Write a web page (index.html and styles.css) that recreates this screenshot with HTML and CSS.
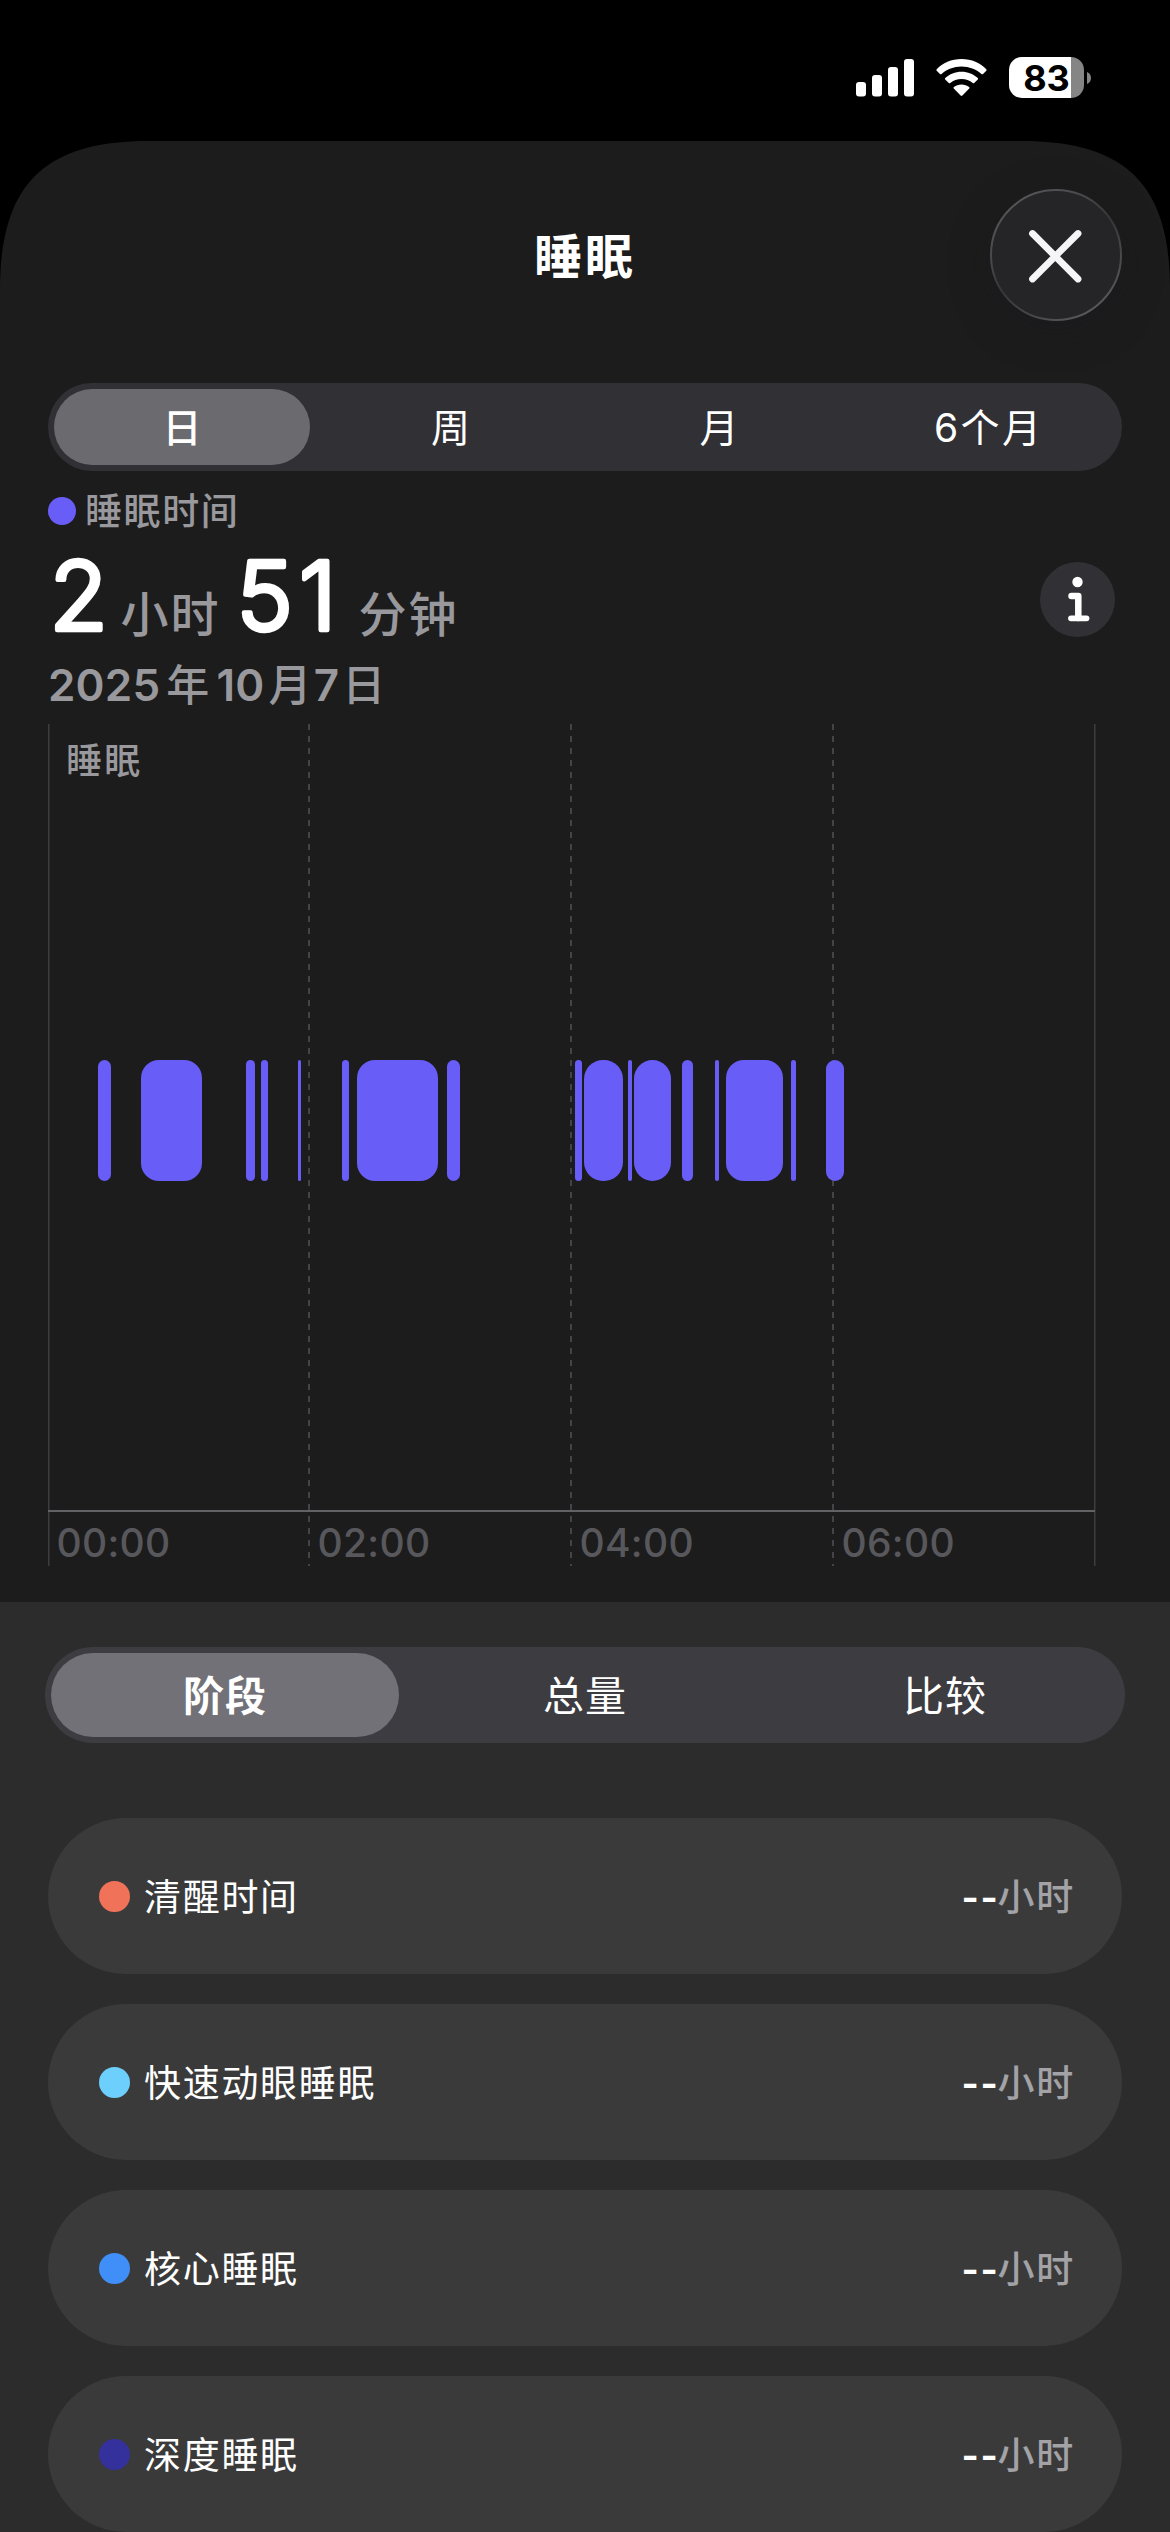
FILE: index.html
```html
<!DOCTYPE html>
<html lang="zh-CN">
<head>
<meta charset="utf-8">
<title>睡眠</title>
<link rel="stylesheet" href="styles.css">
</head>
<body>
<div class="status">
  <svg class="signal" width="58" height="38" viewBox="0 0 58 38" fill="#fff">
    <rect x="0" y="23" width="10" height="14.5" rx="3"/>
    <rect x="16" y="16" width="10" height="21.500" rx="3"/>
    <rect x="32" y="8" width="10" height="29.500" rx="3"/>
    <rect x="48" y="0" width="10" height="37.500" rx="3"/>
  </svg>
  <svg class="wifi" width="51" height="38" viewBox="0 0 51 38" fill="#fff">
    <path d="M25.500 0C35.500 0 44.500 3.900 50.300 10.200Q51 11 50.300 11.700L47 15Q46.200 15.700 45.400 15C40.200 10.300 33.200 7.500 25.500 7.500S10.800 10.300 5.600 15Q4.800 15.700 4 15L.7 11.700Q0 11 .7 10.200C6.500 3.900 15.500 0 25.500 0Z"/>
    <path d="M25.500 12.700C31.800 12.700 37.500 15.100 41.800 19Q42.500 19.700 41.800 20.500L38.200 24Q37.500 24.700 36.700 24C33.700 21.500 29.800 20 25.500 20S17.300 21.500 14.300 24Q13.500 24.700 12.800 24L9.200 20.500Q8.500 19.700 9.200 19C13.500 15.100 19.200 12.700 25.500 12.700Z"/>
    <path d="M25.500 25.500C28.400 25.500 31 26.400 33.100 28Q33.900 28.800 33.200 29.600L26.400 36.600Q25.500 37.400 24.600 36.600L17.800 29.600Q17.100 28.800 17.900 28C20 26.400 22.600 25.500 25.500 25.500Z"/>
  </svg>
  <div class="battery"><span class="battery-level">83</span></div>
  <svg class="nub" width="4" height="12" viewBox="0 0 4 12"><path d="M0 0C2.500 1 4 3.300 4 6S2.500 11 0 12Z" fill="#858585"/></svg>
</div>

<main class="sheet">
  <header class="header">
    <h1 class="title">睡眠</h1>
    <button class="close" aria-label="关闭">
      <svg width="132" height="132" viewBox="0 0 132 132">
        <defs>
          <linearGradient id="rim" x1=".15" y1="0" x2=".85" y2="1">
            <stop offset="0" stop-color="#5a5a5e"/>
            <stop offset=".3" stop-color="#48484c"/>
            <stop offset=".5" stop-color="#363638"/>
            <stop offset=".7" stop-color="#464648"/>
            <stop offset="1" stop-color="#5e5e60"/>
          </linearGradient>
        </defs>
        <circle cx="66" cy="66" r="65" fill="#252527" stroke="url(#rim)" stroke-width="2"/>
        <path d="M42.500 44.500 88 90M88 44.500 42.500 90" stroke="#f5f5f7" stroke-width="6.800" stroke-linecap="round"/>
      </svg>
    </button>
  </header>

  <nav class="range">
    <span class="range-item range-item-on">日</span>
    <span class="range-item">周</span>
    <span class="range-item">月</span>
    <span class="range-item">6个月</span>
  </nav>

  <section class="summary">
    <div class="legend"><i class="legend-dot"></i>睡眠时间</div>
    <div class="value-row">
      <svg class="value" width="500" height="122" viewBox="0 0 500 122">
        <text class="digits" x="1.500" y="99">2</text>
        <text class="unit" x="72.500" y="101">小时</text>
        <text class="digits" x="188.500 251" y="99">51</text>
        <text class="unit" x="310.500" y="101">分钟</text>
      </svg>
      <svg class="info" width="75" height="75" viewBox="0 0 75 75">
        <circle cx="37.500" cy="37.500" r="37.500" fill="#313034"/>
        <circle cx="37.500" cy="20" r="5.200" fill="#fff"/>
        <path d="M31.500 34H38.300V56" fill="none" stroke="#fff" stroke-width="6.500" stroke-linecap="round" stroke-linejoin="round"/>
        <path d="M31 56.300H46.500" stroke="#fff" stroke-width="5.800" stroke-linecap="round"/>
      </svg>
    </div>
    <div class="date">2025<b class="year">年</b>10<b class="month">月</b>7<b class="day">日</b></div>
  </section>

  <svg class="chart" width="1048" height="842" viewBox="0 0 1048 842">
    <g class="grid-solid">
      <path d="M.75 0V842"/><path d="M1046.750 0V842"/>
    </g>
    <g class="grid-dashed">
      <path d="M261 0V842"/><path d="M523 0V842"/><path d="M785 0V842"/>
    </g>
    <path class="axis" d="M0 787H1047"/>
    <g class="bars">
      <rect x="50" y="336" width="13" height="121" rx="6.500"/>
      <rect x="93" y="336" width="61" height="121" rx="18"/>
      <rect x="198" y="336" width="9" height="121" rx="4.500"/>
      <rect x="213" y="336" width="7" height="121" rx="3.500"/>
      <rect x="250" y="336" width="3" height="121" rx="1.500"/>
      <rect x="294" y="336" width="7" height="121" rx="3.500"/>
      <rect x="309" y="336" width="81" height="121" rx="18"/>
      <rect x="399" y="336" width="13" height="121" rx="6.500"/>
      <rect x="527" y="336" width="7" height="121" rx="3.500"/>
      <rect x="536" y="336" width="39" height="121" rx="19"/>
      <rect x="580" y="336" width="4" height="121" rx="2"/>
      <rect x="586" y="336" width="37" height="121" rx="18.500"/>
      <rect x="634" y="336" width="11" height="121" rx="5.500"/>
      <rect x="667" y="336" width="4" height="121" rx="2"/>
      <rect x="678" y="336" width="57" height="121" rx="18"/>
      <rect x="743" y="336" width="5" height="121" rx="2.500"/>
      <rect x="778" y="336" width="18" height="121" rx="9"/>
    </g>
    <text class="series" x="18" y="50">睡眠</text>
    <g class="hours">
      <text x="8.500" y="833">00:00</text>
      <text x="269.500" y="833">02:00</text>
      <text x="531.500" y="833">04:00</text>
      <text x="793.500" y="833">06:00</text>
    </g>
  </svg>

  <section class="panel">
    <nav class="modes">
      <span class="mode mode-on">阶段</span>
      <span class="mode">总量</span>
      <span class="mode">比较</span>
    </nav>
    <ul class="stages">
      <li class="stage"><i class="stage-dot awake"></i><span class="name">清醒时间</span><span class="amount"><b>--</b>小时</span></li>
      <li class="stage"><i class="stage-dot rem"></i><span class="name">快速动眼睡眠</span><span class="amount"><b>--</b>小时</span></li>
      <li class="stage"><i class="stage-dot core"></i><span class="name">核心睡眠</span><span class="amount"><b>--</b>小时</span></li>
      <li class="stage"><i class="stage-dot deep"></i><span class="name">深度睡眠</span><span class="amount"><b>--</b>小时</span></li>
    </ul>
  </section>
</main>
</body>
</html>
```
FILE: styles.css
```css
* { box-sizing: border-box; margin: 0; padding: 0; }
svg { display: block; flex: none; }
body {
  width: 1170px;
  height: 2532px;
  overflow: hidden;
  background: #000;
  color: #fff;
  font-family: Inter, "Noto Sans CJK SC", sans-serif;
}

.status {
  display: flex;
  align-items: flex-start;
  height: 141px;
  padding: 57px 0 0 856px;
}
.signal { margin-top: 2px; }
.wifi { margin: 2px 0 0 22px; }
.battery {
  width: 75px;
  height: 41px;
  margin-left: 22px;
  border-radius: 13px;
  background: linear-gradient(90deg, #fff 62px, #858585 62px);
  color: #000;
}
.battery-level {
  display: block;
  width: 75px;
  font-size: 36px;
  font-weight: 650;
  line-height: 42px;
  text-align: center;
}
.nub { margin: 15px 0 0 3px; }

.sheet {
  height: 2391px;
  background: #1c1c1c;
  clip-path: path("M0 148C0 44 44 0 148 0H1022C1126 0 1170 44 1170 148V2391H0Z");
}
.header {
  display: grid;
  grid-template-columns: 132px 1fr 132px;
  align-items: start;
  height: 180px;
  padding: 48px 48px 0;
}
.title {
  grid-column: 2;
  font-size: 48px;
  font-weight: 700;
  line-height: 135px;
  letter-spacing: 3px;
  text-align: center;
}
.close {
  width: 132px;
  height: 132px;
  border: 0;
  border-radius: 50%;
  background: none;
  box-shadow: 0 10px 40px rgba(26, 26, 32, .4);
}

.range {
  display: grid;
  grid-template-columns: repeat(4, 1fr);
  height: 88px;
  margin: 62px 48px 0;
  border-radius: 44px;
  background: #313034;
}
.range-item {
  height: 76px;
  margin: 6px 7px 6px 6px;
  border-radius: 38px;
  font-size: 39px;
  line-height: 78px;
  letter-spacing: 2.500px;
  text-indent: 3px;
  text-align: center;
}
.range-item-on { background: #6b6a6f; font-weight: 500; }

.summary { height: 253px; padding: 20px 55px 0 48px; color: #98989d; }
.legend {
  display: flex;
  align-items: center;
  height: 40px;
  font-size: 37px;
  font-weight: 500;
  line-height: 43px;
  letter-spacing: 1.600px;
}
.legend-dot {
  width: 28px;
  height: 28px;
  margin-right: 9px;
  border-radius: 50%;
  background: #695df8;
}
.value-row { display: flex; justify-content: space-between; height: 122px; }
.info { margin-top: 31px; }
.digits {
  font-size: 95px;
  font-weight: 300;
  fill: #fff;
  stroke: #fff;
  stroke-width: 4.500px;
  stroke-linejoin: round;
}
.unit { font-size: 48px; font-weight: 500; letter-spacing: 2px; fill: #98989d; }
.date { font-size: 44px; font-weight: 600; line-height: 64px; letter-spacing: .2px; }
.date b { font-size: 43px; font-weight: 500; }
.year { padding: 0 7px 0 6px; }
.month { padding: 0 2px 0 4px; }
.day { padding-left: 3px; }

.chart { margin-left: 48px; }
.grid-solid { stroke: #3d3d40; stroke-width: 1.500px; }
.grid-dashed { stroke: #444446; stroke-width: 2px; stroke-dasharray: 6 6; }
.axis { stroke: #626264; stroke-width: 2px; }
.bars { fill: #695df8; }
.series { font-size: 36px; font-weight: 500; letter-spacing: 2.300px; fill: #98989d; }
.hours { font-size: 39px; font-weight: 500; letter-spacing: .3px; fill: #58585c; }

.panel { height: 930px; margin-top: 36px; padding: 45px 48px 0; background: #2c2c2c; }
.modes {
  display: grid;
  grid-template-columns: repeat(3, 1fr);
  height: 96px;
  margin: 0 -3px;
  border-radius: 48px;
  background: #3d3c41;
}
.mode {
  height: 84px;
  margin: 6px;
  border-radius: 42px;
  font-size: 41px;
  line-height: 86px;
  letter-spacing: 1px;
  text-align: center;
}
.mode-on { background: #727177; font-weight: 700; }
.stages { display: grid; gap: 30px; margin-top: 75px; list-style: none; }
.stage {
  display: flex;
  align-items: center;
  height: 156px;
  padding: 0 47px 0 51px;
  border-radius: 78px;
  background: #3a3a3a;
  font-size: 37px;
  letter-spacing: 1.700px;
}
.stage-dot { width: 31px; height: 31px; margin-right: 14px; border-radius: 50%; }
.awake { background: #f07259; }
.rem { background: #6dcffc; }
.core { background: #408ef8; }
.deep { background: #34319c; }
.name, .amount { padding-bottom: 2px; }
.amount { margin-left: auto; font-weight: 500; color: #a2a2a7; }
.amount b { margin-right: -2px; font-weight: 700; color: #fff; }
```
